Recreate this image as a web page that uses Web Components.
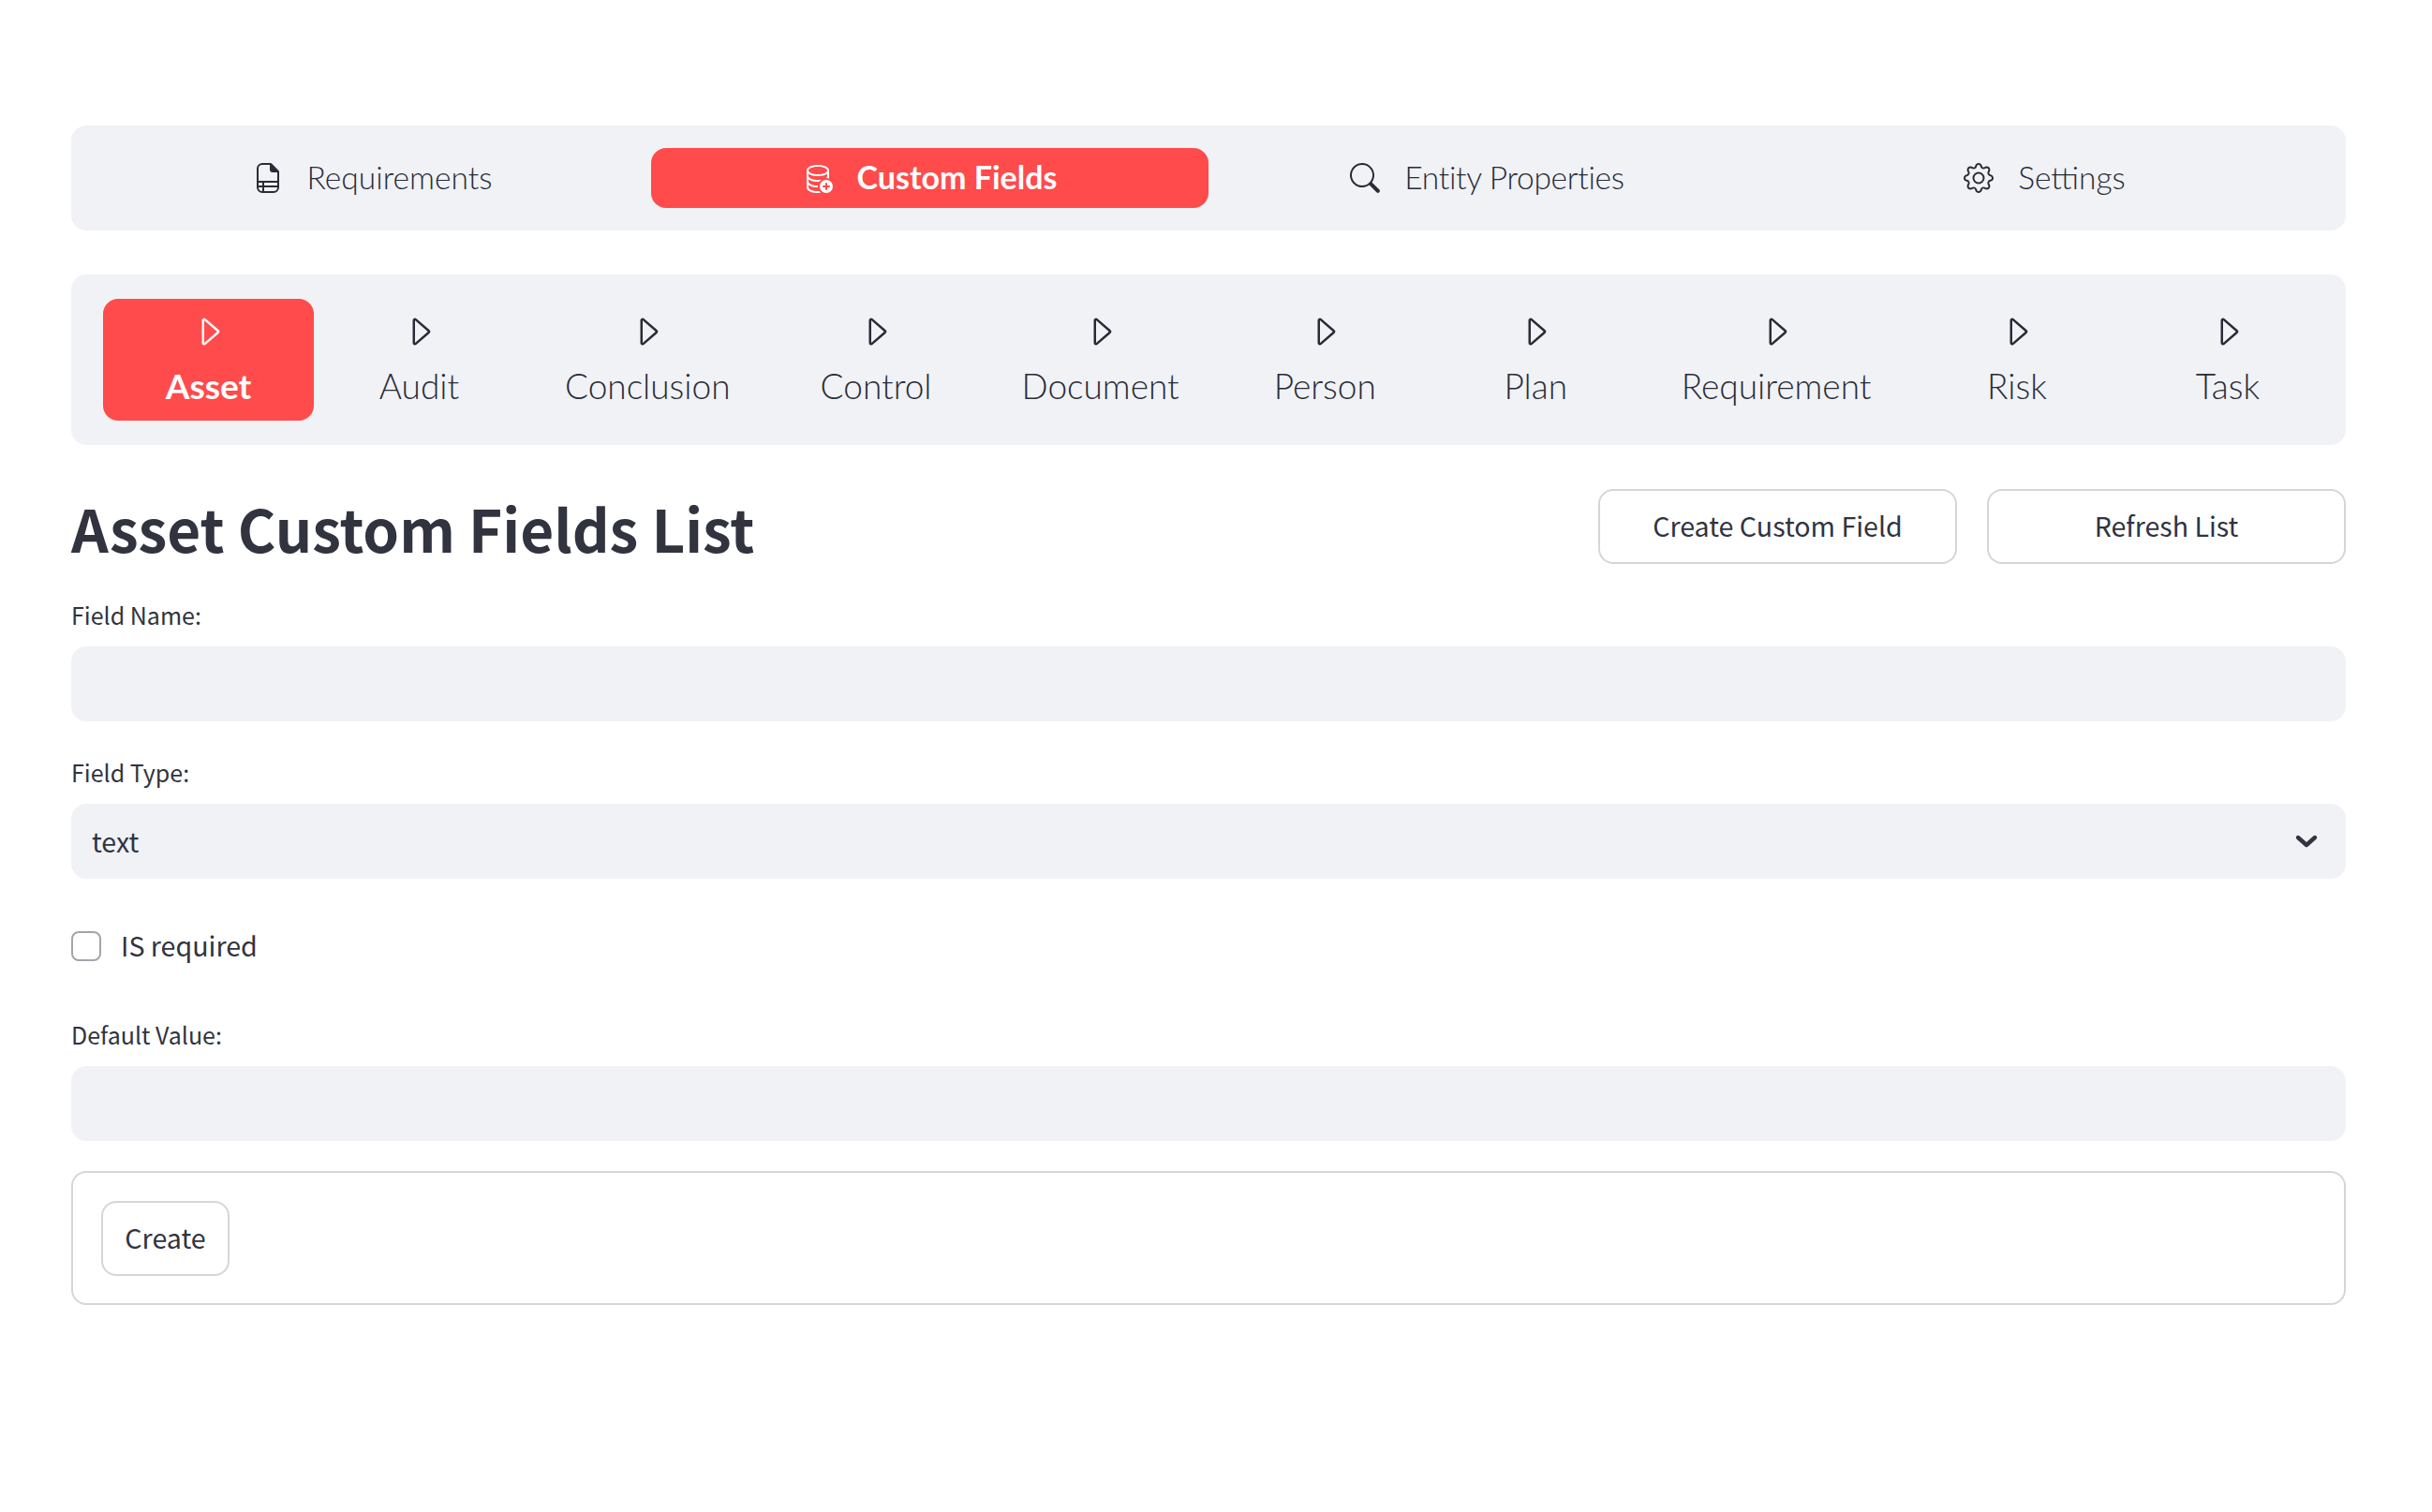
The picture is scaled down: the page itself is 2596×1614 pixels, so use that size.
<!DOCTYPE html>
<html lang="en">
<head>
<meta charset="utf-8">
<title>Asset Custom Fields List</title>
<style>
  html, body { margin: 0; background: #fff; }
  body {
    height: 1614px;
    overflow: hidden;
    color: #31333f;
    font-family: "Noto Sans CJK SC", "Noto Sans", sans-serif;
  }
</style>
</head>
<body>
<app-page></app-page>

<script>
const ICONS = {
  requirements: `<svg viewBox="0 0 16 16" fill="currentColor"><path d="M5 0h4.3a1 1 0 0 1 .7.3l3.7 3.7a1 1 0 0 1 .3.7V13a3 3 0 0 1-3 3H5a3 3 0 0 1-3-3V3a3 3 0 0 1 3-3Zm0 1a2 2 0 0 0-2 2v6.5h10V5H10.500A1.500 1.500 0 0 1 9 3.500V1H5Zm8 9.500H6V12h7v-1.500Zm0 2.500H6v2h5a2 2 0 0 0 2-2ZM5 15v-2H3a2 2 0 0 0 2 2Zm-2-3h2v-1.500H3V12Z"/></svg>`,
  fields: `<svg viewBox="0 0 16 16" fill="currentColor"><path d="M12.096 6.223A4.92 4.92 0 0 0 13 5.698V7c0 .289-.213.654-.753 1.007a4.493 4.493 0 0 1 1.753.25V4c0-1.007-.875-1.755-1.904-2.223C11.022 1.289 9.573 1 8 1s-3.022.289-4.096.777C2.875 2.245 2 2.993 2 4v9c0 1.007.875 1.755 1.904 2.223C4.978 15.71 6.427 16 8 16c.536 0 1.058-.034 1.555-.097a4.525 4.525 0 0 1-.813-.927C8.5 14.992 8.252 15 8 15c-1.464 0-2.766-.27-3.682-.687C3.356 13.875 3 13.373 3 13v-1.302c.271.202.58.378.904.525C4.978 12.71 6.427 13 8 13h.027a4.552 4.552 0 0 1 0-1H8c-1.464 0-2.766-.27-3.682-.687C3.356 10.875 3 10.373 3 10V8.698c.271.202.58.378.904.525C4.978 9.71 6.427 10 8 10c.262 0 .52-.008.774-.024a4.525 4.525 0 0 1 1.102-1.132C9.298 8.944 8.666 9 8 9c-1.464 0-2.766-.27-3.682-.687C3.356 7.875 3 7.373 3 7V5.698c.271.202.58.378.904.525C4.978 6.711 6.427 7 8 7s3.022-.289 4.096-.777ZM3 4c0-.374.356-.875 1.318-1.313C5.234 2.271 6.536 2 8 2s2.766.27 3.682.687C12.644 3.125 13 3.627 13 4c0 .374-.356.875-1.318 1.313C10.766 5.729 9.464 6 8 6s-2.766-.27-3.682-.687C3.356 4.875 3 4.373 3 4Z"/><path d="M16 12.500a3.500 3.500 0 1 1-7 0 3.500 3.500 0 0 1 7 0Zm-3.500-2a.5.5 0 0 0-.5.5v1h-1a.5.5 0 0 0 0 1h1v1a.5.5 0 0 0 1 0v-1h1a.5.5 0 0 0 0-1h-1v-1a.5.5 0 0 0-.5-.5Z"/></svg>`,
  search: `<svg viewBox="0 0 16 16" fill="currentColor"><path d="M11.742 10.344a6.500 6.500 0 1 0-1.397 1.398l3.850 3.850a1 1 0 0 0 1.415-1.414l-3.868-3.834ZM12 6.500a5.500 5.500 0 1 1-11 0 5.500 5.500 0 0 1 11 0Z"/></svg>`,
  gear: `<svg viewBox="0 0 16 16" fill="currentColor"><path d="M8 4.754a3.246 3.246 0 1 0 0 6.492 3.246 3.246 0 0 0 0-6.492ZM5.754 8a2.246 2.246 0 1 1 4.492 0 2.246 2.246 0 0 1-4.492 0Z"/><path d="M9.796 1.343c-.527-1.790-3.065-1.790-3.592 0l-.094.319a.873.873 0 0 1-1.255.520l-.292-.16c-1.640-.892-3.433.902-2.540 2.541l.159.292a.873.873 0 0 1-.520 1.255l-.319.094c-1.790.527-1.790 3.065 0 3.592l.319.094a.873.873 0 0 1 .520 1.255l-.16.292c-.892 1.640.901 3.434 2.541 2.540l.292-.159a.873.873 0 0 1 1.255.520l.094.319c.527 1.790 3.065 1.790 3.592 0l.094-.319a.873.873 0 0 1 1.255-.520l.292.160c1.640.893 3.434-.902 2.540-2.541l-.159-.292a.873.873 0 0 1 .520-1.255l.319-.094c1.790-.527 1.790-3.065 0-3.592l-.319-.094a.873.873 0 0 1-.520-1.255l.160-.292c.893-1.640-.902-3.433-2.541-2.540l-.292.159a.873.873 0 0 1-1.255-.520l-.094-.319Zm-2.633.283c.246-.835 1.428-.835 1.674 0l.094.319a1.873 1.873 0 0 0 2.693 1.115l.291-.160c.764-.415 1.600.420 1.184 1.185l-.159.292a1.873 1.873 0 0 0 1.116 2.692l.318.094c.835.246.835 1.428 0 1.674l-.319.094a1.873 1.873 0 0 0-1.115 2.693l.160.291c.415.764-.420 1.600-1.185 1.184l-.291-.159a1.873 1.873 0 0 0-2.693 1.116l-.094.318c-.246.835-1.428.835-1.674 0l-.094-.319a1.873 1.873 0 0 0-2.692-1.115l-.292.160c-.764.415-1.600-.420-1.184-1.185l.159-.291A1.873 1.873 0 0 0 1.945 8.930l-.319-.094c-.835-.246-.835-1.428 0-1.674l.319-.094A1.873 1.873 0 0 0 3.060 4.377l-.160-.292c-.415-.764.420-1.600 1.185-1.184l.292.159a1.873 1.873 0 0 0 2.692-1.115l.094-.319Z"/></svg>`,
  play: `<svg viewBox="0 0 16 16" fill="currentColor"><path d="M6 12.796V3.204L11.481 8 6 12.796Zm.659.753 5.480-4.796a1 1 0 0 0 0-1.506L6.659 2.451C6.011 1.885 5 2.345 5 3.204v9.592a1 1 0 0 0 1.659.753Z"/></svg>`
};

class NavItem extends HTMLElement {
  connectedCallback() {
    const root = this.attachShadow({ mode: 'open' });
    const icon = ICONS[this.getAttribute('icon')];
    root.innerHTML = `
      <style>
        :host {
          display: flex;
          align-items: center;
          justify-content: center;
          box-sizing: border-box;
          border-radius: 16px;
          color: #292b36;
          font-family: "Lato", "Noto Sans", sans-serif;
          font-weight: 300;
          font-size: 33.5px;
          white-space: nowrap;
        }
        :host([active]) { background: #ff4b4b; color: #fff; font-weight: 700; }
        :host(:not([stacked])) { flex: 1 1 0; height: 64px; gap: 26px; }
        :host(:not([stacked])[active]) { font-size: 34px; }
        :host(:not([stacked])) span { padding-bottom: 3px; letter-spacing: var(--track, 0); }
        :host([stacked]) {
          flex: 0 0 auto;
          flex-direction: column;
          justify-content: flex-start;
          min-width: 225px;
          height: 130px;
          padding: 15px 43px 0;
          font-size: 37px;
        }
        svg { display: block; width: 32px; height: 32px; }
        :host([stacked]) svg { width: 40px; height: 40px; margin-bottom: 15px; }
        :host([stacked]) span { line-height: 46px; }
      </style>
      ${icon}<span><slot></slot></span>`;
  }
}

class NavBar extends HTMLElement {
  connectedCallback() {
    this.attachShadow({ mode: 'open' }).innerHTML = `
      <style>
        :host {
          display: flex;
          box-sizing: border-box;
          background: #f0f2f6;
          border-radius: 16px;
          padding: 24px;
        }
        :host([stacked]) { padding: 26px 14px 26px 34px; }
      </style>
      <slot></slot>`;
  }
}

class UiButton extends HTMLElement {
  connectedCallback() {
    this.attachShadow({ mode: 'open' }).innerHTML = `
      <style>
        :host {
          display: flex;
          align-items: center;
          justify-content: center;
          box-sizing: border-box;
          height: 80px;
          padding: 0 26px 4px;
          background: #fff;
          border: 2px solid #d5d6d9;
          border-radius: 16px;
          font-size: 28.6px;
          color: #31333f;
        }
      </style>
      <slot></slot>`;
  }
}

class FormField extends HTMLElement {
  connectedCallback() {
    const select = this.hasAttribute('select');
    this.attachShadow({ mode: 'open' }).innerHTML = `
      <style>
        :host { display: block; }
        label {
          display: block;
          font-size: 25px;
          line-height: 28px;
          height: 48px;
          color: #31333f;
        }
        .box {
          display: flex;
          align-items: center;
          justify-content: space-between;
          box-sizing: border-box;
          height: 80px;
          padding: 0 24px 0 22px;
          background: #f0f2f6;
          border-radius: 16px;
          font-size: 28.6px;
        }
        .box span { padding-bottom: 2px; }
        svg { width: 36px; height: 36px; display: block; }
      </style>
      <label>${this.getAttribute('label')}</label>
      <div class="box">
        <span><slot></slot></span>
        ${select ? `<svg viewBox="0 0 36 36" fill="none" stroke="currentColor" stroke-width="4.400" stroke-linecap="round" stroke-linejoin="round"><path d="M9 14l9 8 9-8"/></svg>` : ''}
      </div>`;
  }
}

class UiCheckbox extends HTMLElement {
  connectedCallback() {
    this.attachShadow({ mode: 'open' }).innerHTML = `
      <style>
        :host {
          display: flex;
          align-items: center;
          gap: 21px;
          height: 40px;
          font-size: 28.6px;
        }
        i {
          display: block;
          box-sizing: border-box;
          width: 32px;
          height: 32px;
          border: 2px solid #a3a5ab;
          border-radius: 8px;
          background: #fff;
        }
        span { padding-bottom: 4px; }
      </style>
      <i></i><span><slot></slot></span>`;
  }
}

class FormBox extends HTMLElement {
  connectedCallback() {
    this.attachShadow({ mode: 'open' }).innerHTML = `
      <style>
        :host {
          display: flex;
          box-sizing: border-box;
          height: 143px;
          padding: 30px;
          border: 2px solid #d5d6d9;
          border-radius: 16px;
        }
      </style>
      <slot></slot>`;
  }
}

class PageHeader extends HTMLElement {
  connectedCallback() {
    this.attachShadow({ mode: 'open' }).innerHTML = `
      <style>
        :host {
          display: flex;
          align-items: center;
          justify-content: space-between;
          height: 80px;
        }
        h1 {
          margin: 0;
          padding-top: 2px;
          font-size: 62px;
          font-weight: 700;
          line-height: 78px;
          color: #31333f;
        }
        .actions { display: flex; gap: 32px; }
        ::slotted(ui-button) { width: 383px; }
      </style>
      <h1>${this.getAttribute('title')}</h1>
      <div class="actions"><slot></slot></div>`;
  }
}

class AppPage extends HTMLElement {
  connectedCallback() {
    const root = this.attachShadow({ mode: 'open' });
    const tabs = ['Asset', 'Audit', 'Conclusion', 'Control', 'Document', 'Person', 'Plan', 'Requirement', 'Risk', 'Task'];
    root.innerHTML = `
      <style>
        :host {
          display: flex;
          flex-direction: column;
          padding: 134px 92px 0 76px;
        }
        .top { margin-bottom: 47px; }
        .sub { margin-bottom: 47px; }
        page-header { margin-bottom: 40px; }
        .f1 { margin-bottom: 40px; }
        .f2 { margin-bottom: 52px; }
        ui-checkbox { margin-bottom: 60px; }
        .f3 { margin-bottom: 32px; }
        form-box ui-button { width: 137px; padding: 0 0 4px; }
      </style>
      <nav-bar class="top">
        <nav-item icon="requirements">Requirements</nav-item>
        <nav-item icon="fields" active>Custom Fields</nav-item>
        <nav-item icon="search" style="--track:-.3px">Entity Properties</nav-item>
        <nav-item icon="gear">Settings</nav-item>
      </nav-bar>
      <nav-bar class="sub" stacked>
        ${tabs.map((t, i) => `<nav-item icon="play" stacked ${i === 0 ? 'active' : ''}>${t}</nav-item>`).join('')}
      </nav-bar>
      <page-header title="Asset Custom Fields List">
        <ui-button>Create Custom Field</ui-button>
        <ui-button>Refresh List</ui-button>
      </page-header>
      <form-field class="f1" label="Field Name:"></form-field>
      <form-field class="f2" label="Field Type:" select>text</form-field>
      <ui-checkbox>IS required</ui-checkbox>
      <form-field class="f3" label="Default Value:"></form-field>
      <form-box><ui-button>Create</ui-button></form-box>`;
  }
}

customElements.define('nav-item', NavItem);
customElements.define('nav-bar', NavBar);
customElements.define('ui-button', UiButton);
customElements.define('form-field', FormField);
customElements.define('ui-checkbox', UiCheckbox);
customElements.define('form-box', FormBox);
customElements.define('page-header', PageHeader);
customElements.define('app-page', AppPage);
</script>
</body>
</html>
